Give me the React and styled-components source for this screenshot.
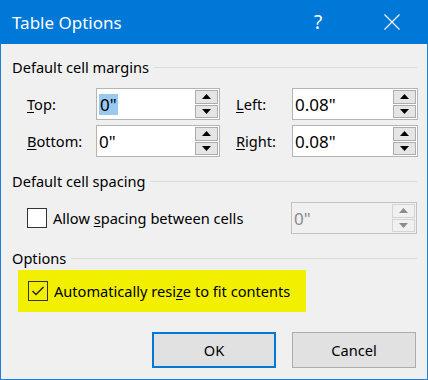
import React from 'react'
import styled, { createGlobalStyle } from 'styled-components'

const Global = createGlobalStyle`
  html, body { margin: 0; padding: 0; background: #f0f0f0; }
  * { box-sizing: border-box; }
`

const Window = styled.div`
  width: 428px;
  height: 380px;
  border: 1px solid #1a80d6;
  border-top: none;
  background: #f0f0f0;
  font-family: "Noto Sans", "Open Sans", sans-serif;
  font-size: 14.6px;
  color: #000;
  display: flex;
  flex-direction: column;
`

const TitleBar = styled.div`
  height: 44px;
  margin: 0 -1px;
  background: #0078d7;
  color: #fff;
  display: flex;
  align-items: center;
  padding-left: 12px;
  font-size: 17px;
`

const TitleText = styled.div`
  flex: 1;
`

const Help = styled.div`
  width: 30px;
  text-align: center;
  margin-right: 51px;
  font-size: 19px;
`

const Close = styled.svg`
  margin-right: 28px;
`

const Body = styled.div`
  padding: 13px 10px 0 11px;
`

const GroupHead = styled.div`
  display: flex;
  align-items: center;
  height: 20px;
  margin-top: ${p => p.$top || 0}px;
  &::after {
    content: '';
    flex: 1;
    height: 1px;
    background: #dcdcdc;
    margin-left: 5px;
  }
`

const MarginGrid = styled.div`
  display: grid;
  grid-template-columns: 69px 124px 72px 126px;
  grid-auto-rows: 32px;
  row-gap: 5px;
  align-items: center;
  margin-top: 11px;
  padding-left: 15px;
`

const Label = styled.div`
  padding-left: ${p => p.$indent || 0}px;
`

const Key = styled.span`
  text-decoration: underline;
  text-underline-offset: 2px;
`

const Spin = styled.div`
  height: 32px;
  display: flex;
  border: 1px solid ${p => (p.$off ? '#c2c2c2' : '#b4b4b4')};
  background: ${p => (p.$off ? '#f0f0f0' : '#fff')};
  padding: 1px;
`

const SpinText = styled.div`
  flex: 1;
  display: flex;
  align-items: center;
  padding-left: 1px;
  font-size: 17px;
  color: ${p => (p.$off ? '#8a8a8a' : '#000')};
`

const Sel = styled.span`
  background: #99c9ef;
  padding: 0 1px;
  line-height: 21px;
`

const Arrows = styled.div`
  width: 23px;
  display: flex;
  flex-direction: column;
  gap: 1px;
`

const ArrowBtn = styled.div`
  flex: 1;
  border: 1px solid ${p => (p.$off ? '#d4d4d4' : '#acacac')};
  background: ${p => (p.$off ? '#f0f0f0' : '#e5e5e5')};
  display: flex;
  align-items: center;
  justify-content: center;
`

const Tri = ({ down, off }) => (
  <svg width="9" height="5" viewBox="0 0 9 5">
    <polygon
      points={down ? '0,0 9,0 4.5,5' : '0,5 9,5 4.5,0'}
      fill={off ? '#8c8c8c' : '#000'}
    />
  </svg>
)

const SpinBox = ({ value, selected, off }) => (
  <Spin $off={off}>
    <SpinText $off={off}>{selected ? <Sel>{value}</Sel> : value}</SpinText>
    <Arrows>
      <ArrowBtn $off={off}><Tri off={off} /></ArrowBtn>
      <ArrowBtn $off={off}><Tri down off={off} /></ArrowBtn>
    </Arrows>
  </Spin>
)

const CheckRow = styled.div`
  display: flex;
  align-items: center;
  height: 32px;
  margin-top: 11px;
  padding-left: 15px;
`

const Box = styled.div`
  width: 20px;
  height: 20px;
  border: 1px solid #333;
  background: ${p => (p.$clear ? 'transparent' : '#fff')};
  display: flex;
  align-items: center;
  justify-content: center;
  margin-right: 6px;
  flex: none;
`

const CheckText = styled.div`
  flex: 1;
`

const SpacingSpin = styled.div`
  width: 126px;
`

const Highlight = styled.div`
  display: flex;
  align-items: center;
  width: 288px;
  height: 42px;
  margin: 2px 0 0 6px;
  padding-left: 10px;
  background: #f2f000;
`

const Buttons = styled.div`
  display: flex;
  justify-content: flex-end;
  gap: 16px;
  margin-top: 20px;
  padding-right: 1px;
`

const Button = styled.div`
  width: 124px;
  height: 36px;
  border: ${p => (p.$default ? '2px solid #0078d7' : '1px solid #adadad')};
  background: #e1e1e1;
  display: flex;
  align-items: center;
  justify-content: center;
`

export default function App() {
  return (
    <Window>
      <Global />
      <TitleBar>
        <TitleText>Table Options</TitleText>
        <Help>?</Help>
        <Close width="16" height="16" viewBox="0 0 16 16">
          <path d="M0.5 0.5 L15.5 15.5 M15.5 0.5 L0.5 15.5" stroke="#fff" strokeWidth="1.1" />
        </Close>
      </TitleBar>
      <Body>
        <GroupHead>Default cell margins</GroupHead>
        <MarginGrid>
          <Label><Key>T</Key>op:</Label>
          <SpinBox value={'0"'} selected />
          <Label $indent={16}><Key>L</Key>eft:</Label>
          <SpinBox value={'0.08"'} />
          <Label><Key>B</Key>ottom:</Label>
          <SpinBox value={'0"'} />
          <Label $indent={16}><Key>R</Key>ight:</Label>
          <SpinBox value={'0.08"'} />
        </MarginGrid>

        <GroupHead $top={14}>Default cell spacing</GroupHead>
        <CheckRow>
          <Box />
          <CheckText>Allow <Key>s</Key>pacing between cells</CheckText>
          <SpacingSpin>
            <SpinBox value={'0"'} off />
          </SpacingSpin>
        </CheckRow>

        <GroupHead $top={14}>Options</GroupHead>
        <Highlight>
          <Box $clear>
            <svg width="14" height="12" viewBox="0 0 14 12">
              <polyline points="1.5,6 5,9.5 12.5,2" fill="none" stroke="#222" strokeWidth="1.4" />
            </svg>
          </Box>
          <CheckText>Automatically resi<Key>z</Key>e to fit contents</CheckText>
        </Highlight>

        <Buttons>
          <Button $default>OK</Button>
          <Button>Cancel</Button>
        </Buttons>
      </Body>
    </Window>
  )
}
